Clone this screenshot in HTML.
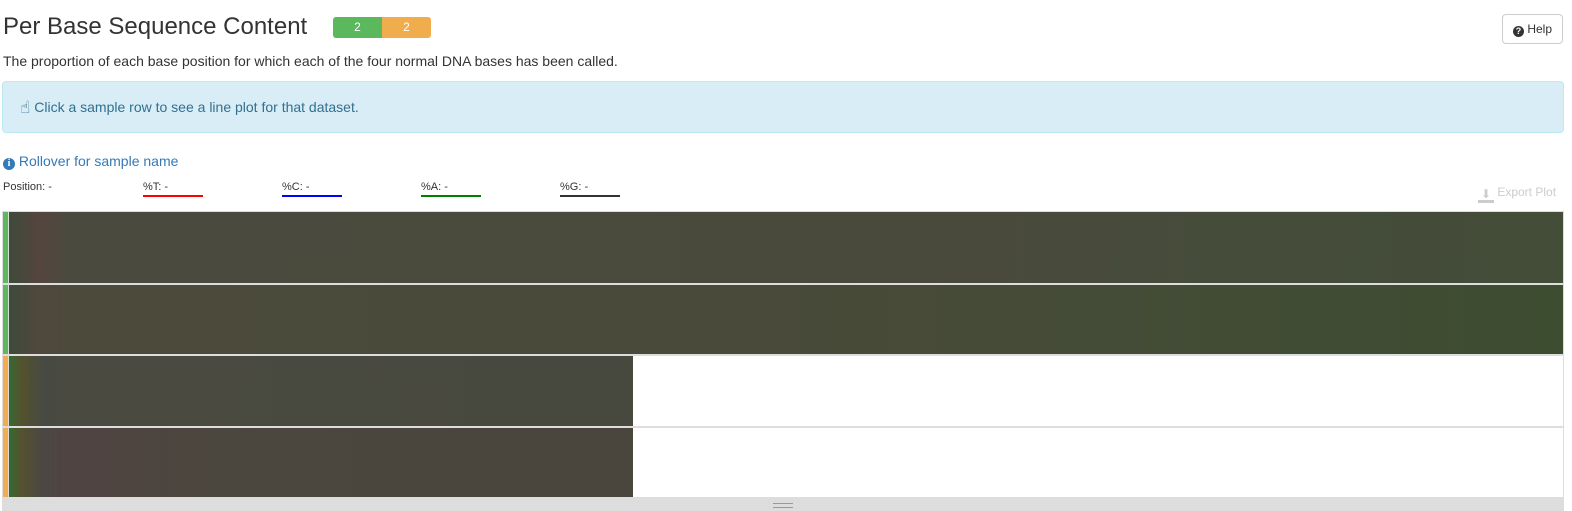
<!DOCTYPE html>
<html style="overflow:hidden"><head><style>
html,body{margin:0;overflow:hidden}
body{width:1572px;height:511px;background:#fff;font-family:"Liberation Sans",sans-serif;color:#333;position:relative}
.a{position:absolute}
</style></head><body>
<div class="a" style="left:3px;top:10px;font-size:24px;line-height:34px">Per Base Sequence Content</div>
<div class="a" style="left:333px;top:17px;width:49px;height:21px;background:#5cb85c;border-radius:3px 0 0 3px;color:#fff;font-size:12px;text-align:center;line-height:20px">2</div>
<div class="a" style="left:382px;top:17px;width:49px;height:21px;background:#f0ad4e;border-radius:0 3px 3px 0;color:#fff;font-size:12px;text-align:center;line-height:20px">2</div>
<div class="a" style="left:1502px;top:14px;width:61px;height:30px;border:1px solid #ccc;border-radius:4px;box-sizing:border-box;font-size:12px;line-height:28px;text-align:center;color:#333"><span style="display:inline-block;width:11px;height:11px;border-radius:50%;background:#333;color:#fff;font-size:9px;line-height:11px;font-weight:bold;vertical-align:-1px">?</span> Help</div>
<div class="a" style="left:3px;top:53px;font-size:14px">The proportion of each base position for which each of the four normal DNA bases has been called.</div>
<div class="a" style="left:2px;top:81px;width:1562px;height:52px;box-sizing:border-box;background:#d9edf7;border:1px solid #bce8f1;border-radius:4px;color:#31708f;font-size:14px;line-height:50px;padding-left:17px"><span style="font-family:'DejaVu Sans';font-size:17px;vertical-align:-1px">☝</span> Click a sample row to see a line plot for that dataset.</div>
<div class="a" style="left:3px;top:153px;font-size:14px;color:#337ab7"><span style="display:inline-block;width:12px;height:12px;border-radius:50%;background:#337ab7;color:#fff;font-size:10px;line-height:12px;text-align:center;font-weight:bold;font-family:'Liberation Serif',serif">i</span> Rollover for sample name</div>
<div class="a" style="left:3px;top:181px;font-size:11px">Position: -</div>
<div class="a" style="left:143px;top:181px;font-size:11px;width:60px;border-bottom:2px solid red;height:14px">%T: -</div>
<div class="a" style="left:282px;top:181px;font-size:11px;width:60px;border-bottom:2px solid blue;height:14px">%C: -</div>
<div class="a" style="left:421px;top:181px;font-size:11px;width:60px;border-bottom:2px solid green;height:14px">%A: -</div>
<div class="a" style="left:560px;top:181px;font-size:11px;width:60px;border-bottom:2px solid #333;height:14px">%G: -</div>
<div class="a" style="left:1478px;top:185px;font-size:12px;color:#ccc"><span style="display:inline-block;width:16px;height:13px;border-bottom:3px solid #ccc;box-sizing:border-box;vertical-align:-2px;text-align:center;font-size:12px;line-height:9px">⬇</span> Export Plot</div>
<div class="a" style="left:2px;top:211px;width:1562px;height:288px;background:#ddd"></div>
<div class="a" style="left:3px;top:212px;width:5px;height:71px;background:#5cb85c"></div>
<div class="a" style="left:3px;top:285px;width:5px;height:69px;background:#5cb85c"></div>
<div class="a" style="left:3px;top:356px;width:5px;height:70px;background:#f0ad4e"></div>
<div class="a" style="left:3px;top:428px;width:5px;height:69px;background:#f0ad4e"></div>
<div class="a" style="left:9px;top:212px;width:1554px;height:71px;background:linear-gradient(90deg,#3e4a3a 0,#55453f 30px,#4a4a3e 60px,#4a4a3c 900px,#454c3a 1300px,#434d38 100%)"></div>
<div class="a" style="left:9px;top:285px;width:1554px;height:69px;background:linear-gradient(90deg,#3e4a3a 0,#50473d 30px,#4b4a3b 60px,#4a4a3a 700px,#414c34 1300px,#3d4d30 100%)"></div>
<div class="a" style="left:9px;top:356px;width:624px;height:70px;background:linear-gradient(90deg,#356a32 0,#54522e 12px,#474a42 35px,#4a4a40 60px,#48493e 100%)"></div>
<div class="a" style="left:633px;top:356px;width:930px;height:70px;background:#fff"></div>
<div class="a" style="left:9px;top:428px;width:624px;height:69px;background:linear-gradient(90deg,#356a32 0,#54522e 12px,#4a4744 35px,#504442 60px,#4b463e 200px,#4a463e 100%)"></div>
<div class="a" style="left:633px;top:428px;width:930px;height:69px;background:#fff"></div>
<div class="a" style="left:2px;top:499px;width:1562px;height:12px;background:#ddd"></div>
<div class="a" style="left:773px;top:503px;width:20px;height:3px;border-top:1px solid #999;border-bottom:1px solid #999"></div>
</body></html>
